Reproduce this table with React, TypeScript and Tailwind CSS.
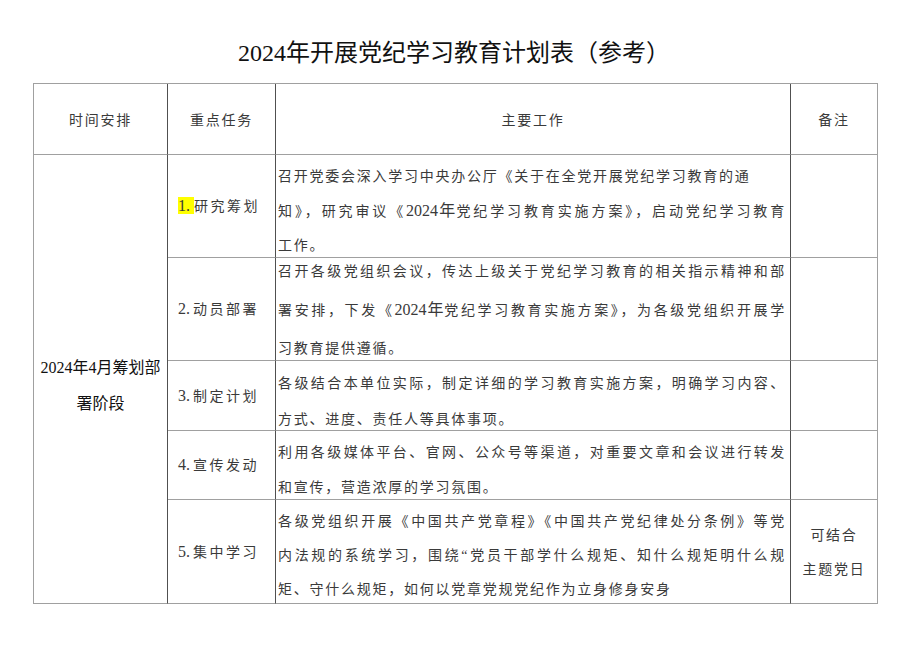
import React from "react";

const font = "font-['Liberation_Serif','Noto_Sans_CJK_SC',serif]";

type Seg = string | { num: string };

function Line({ parts, full }: { parts: Seg[]; full?: boolean }) {
  return (
    <div
      className={
        "whitespace-nowrap leading-[20px] " +
        (full ? "w-[508px] text-justify [text-align-last:justify]" : "")
      }
    >
      {parts.map((p, i) =>
        typeof p === "string" ? (
          <span key={i}>{p}</span>
        ) : (
          <span key={i} className="text-[16px] tracking-normal">
            {p.num}
          </span>
        )
      )}
    </div>
  );
}

const rows: {
  h: string;
  task: React.ReactNode;
  pad: string;
  lines: { parts: Seg[]; full?: boolean }[];
  note?: React.ReactNode;
}[] = [
  {
    h: "h-[103px]",
    task: (
      <>
        <span className="bg-[#ffff00] text-[16px] tracking-normal pr-[4px]">1.</span>
        研究筹划
      </>
    ),
    pad: "pt-[12px] flex flex-col gap-[14px]",
    lines: [
      { parts: ["召开党委会深入学习中央办公厅《关于在全党开展党纪学习教育的通"] },
      { parts: ["知》，研究审议《", { num: "2024年" }, "党纪学习教育实施方案》，启动党纪学习教育"], full: true },
      { parts: ["工作。"] },
    ],
  },
  {
    h: "h-[103px]",
    task: (
      <>
        <span className="text-[16px] tracking-normal pr-[3px]">2.</span>动员部署
      </>
    ),
    pad: "pt-[4px] flex flex-col gap-[18px]",
    lines: [
      { parts: ["召开各级党组织会议，传达上级关于党纪学习教育的相关指示精神和部"], full: true },
      { parts: ["署安排，下发《", { num: "2024年" }, "党纪学习教育实施方案》，为各级党组织开展学"], full: true },
      { parts: ["习教育提供遵循。"] },
    ],
  },
  {
    h: "h-[70px]",
    task: (
      <>
        <span className="text-[16px] tracking-normal pr-[3px]">3.</span>制定计划
      </>
    ),
    pad: "pt-[13px] flex flex-col gap-[16px]",
    lines: [
      { parts: ["各级结合本单位实际，制定详细的学习教育实施方案，明确学习内容、"], full: true },
      { parts: ["方式、进度、责任人等具体事项。"] },
    ],
  },
  {
    h: "h-[69px]",
    task: (
      <>
        <span className="text-[16px] tracking-normal pr-[3px]">4.</span>宣传发动
      </>
    ),
    pad: "pt-[12px] flex flex-col gap-[15px]",
    lines: [
      { parts: ["利用各级媒体平台、官网、公众号等渠道，对重要文章和会议进行转发"], full: true },
      { parts: ["和宣传，营造浓厚的学习氛围。"] },
    ],
  },
  {
    h: "h-[104px]",
    task: (
      <>
        <span className="text-[16px] tracking-normal pr-[3px]">5.</span>集中学习
      </>
    ),
    pad: "pt-[12px] flex flex-col gap-[14px]",
    lines: [
      { parts: ["各级党组织开展《中国共产党章程》《中国共产党纪律处分条例》等党"], full: true },
      { parts: ["内法规的系统学习，围绕“党员干部学什么规矩、知什么规矩明什么规"], full: true },
      { parts: ["矩、守什么规矩，如何以党章党规党纪作为立身修身安身"] },
    ],
    note: (
      <div className="flex flex-col gap-[14px] leading-[20px] pt-[2px]">
        <div>可结合</div>
        <div>主题党日</div>
      </div>
    ),
  },
];

export default function App() {
  const vline = "border-r border-r-[#505050]";
  const hline = "border-b border-b-[#a0a0a0]";
  return (
    <div className={`w-[920px] h-[651px] bg-white ${font} text-[#3a3a3a]`}>
      <div className="pt-[37px] pr-[12px] text-center text-[24px] leading-[32px] text-[#111]">
        2024年开展党纪学习教育计划表（参考）
      </div>
      <table className="ml-[33px] mt-[14px] table-fixed border-separate border-spacing-0 border-l border-t border-[#a0a0a0] text-[14px] tracking-[1.75px]">
        <colgroup>
          <col className="w-[134px]" />
          <col className="w-[108px]" />
          <col className="w-[515px]" />
          <col className="w-[87px]" />
        </colgroup>
        <tbody>
          <tr>
            <td className={`h-[71px] text-center align-middle pt-[3px] ${vline} ${hline}`}>时间安排</td>
            <td className={`text-center align-middle pt-[3px] ${vline} ${hline}`}>重点任务</td>
            <td className={`text-center align-middle pt-[3px] ${vline} ${hline}`}>主要工作</td>
            <td className={`text-center align-middle pt-[3px] border-r border-r-[#a0a0a0] ${hline}`}>备注</td>
          </tr>
          {rows.map((r, i) => (
            <tr key={i}>
              {i === 0 && (
                <td
                  rowSpan={5}
                  className={`text-center align-middle pt-[13px] text-[16px] tracking-normal leading-[36px] text-[#111] ${vline} ${hline}`}
                >
                  2024年4月筹划部
                  <br />
                  署阶段
                </td>
              )}
              <td className={`${r.h} align-middle pl-[10px] whitespace-nowrap tracking-[2.5px] ${vline} ${hline}`}>{r.task}</td>
              <td className={`align-top pl-[2px] ${vline} ${hline}`}>
                <div className={r.pad}>
                  {r.lines.map((l, j) => (
                    <Line key={j} parts={l.parts} full={l.full} />
                  ))}
                </div>
              </td>
              <td className={`text-center align-middle border-r border-r-[#a0a0a0] ${hline}`}>{r.note}</td>
            </tr>
          ))}
        </tbody>
      </table>
    </div>
  );
}
